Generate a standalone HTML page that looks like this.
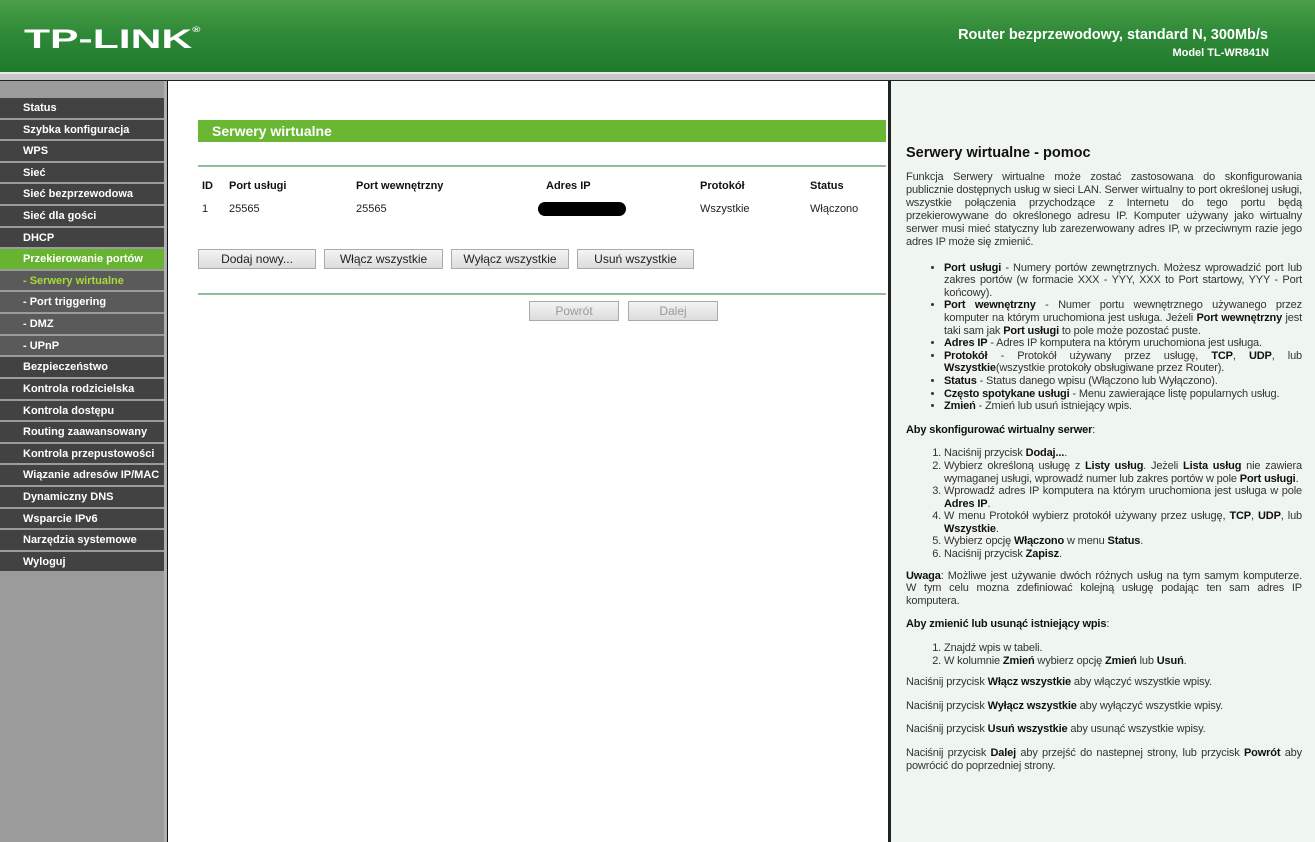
<!DOCTYPE html>
<html><head><meta charset="utf-8"><style>
*{margin:0;padding:0;box-sizing:border-box}
body{width:1315px;height:842px;overflow:hidden;font-family:"Liberation Sans",Arial,sans-serif;background:#fff;position:relative}
#hdr{position:absolute;left:0;top:0;width:1315px;height:72px;background:linear-gradient(180deg,#4c9f47 0%,#2f8a38 45%,#1f7a2c 100%)}
#hdr .logo{position:absolute;left:24px;top:24px;color:#fff;font-weight:bold;font-size:27px;transform:scaleX(1.58);transform-origin:0 0;font-family:"Liberation Sans",Arial,sans-serif;line-height:30px}
#hdr .t1{position:absolute;right:47px;top:27px;color:#fff;font-weight:bold;font-size:14.5px}
#hdr .t2{position:absolute;right:46px;top:47px;color:#fff;font-weight:bold;font-size:11px}
#band{position:absolute;left:0;top:72px;width:1315px;height:9px;background:#c8c8c8;border-top:2px solid #eaeaea;border-bottom:1px solid #222}
#side{position:absolute;left:0;top:81px;width:168px;height:761px;background:#9b9b9b;border-right:1px solid #111}
#side:after{content:"";position:absolute;left:164px;top:0;width:3px;height:761px;background:#b0b0b0}
#side ul{list-style:none;position:absolute;top:17px;left:0;width:164px}
#side li{height:21.62px;border-bottom:2px solid #9b9b9b;background:#424242;color:#fff;font-weight:bold;font-size:11px;line-height:21px;padding-left:23px}
#side li.a{background:#66b42f}
#side li.s{background:#5a5a5a}
#side li.c{color:#a5dd3a}
#help{position:absolute;left:888px;top:81px;width:427px;height:761px;background:#eff5ef;border-left:3px solid #222;padding:66px 13px 0 15px;font-size:11px;line-height:12.6px;color:#333;letter-spacing:-0.15px}
#help h2{font-size:14.5px;color:#111;margin-bottom:11px;font-weight:bold;letter-spacing:0}
#help p{text-align:justify;margin-bottom:11px}
#help p.first{line-height:13px}
#help b{color:#111}
#help ul,#help ol{margin:0 0 9px 38px;text-align:justify}
#help ul{margin-top:13px;margin-bottom:11px}
#help ol{margin-top:7px}
.g{position:absolute;left:198px;top:120px;width:688px;height:22px;background:#69b733;color:#fff;font-weight:bold;font-size:14px;line-height:22px;padding-left:14px}
.ln{position:absolute;left:198px;width:688px;height:2px;background:#8fbe9a}
.tx{position:absolute;font-size:11px;color:#222}
.th{font-weight:bold;color:#111}
.btn{position:absolute;height:20px;background:linear-gradient(#f4f4f4,#dcdcdc);border:1px solid #aaa;font-size:12px;color:#222;text-align:center;line-height:18px}
.dis{color:#999}
</style></head><body>
<div id="hdr"><div class="logo">TP-LINK<span style="font-size:7px;vertical-align:top;line-height:14px">®</span></div>
<div class="t1">Router bezprzewodowy, standard N, 300Mb/s</div><div class="t2">Model TL-WR841N</div></div>
<div id="band"></div>
<div id="side"><ul>
<li>Status</li><li>Szybka konfiguracja</li><li>WPS</li><li>Sieć</li><li>Sieć bezprzewodowa</li><li>Sieć dla gości</li><li>DHCP</li><li class="a">Przekierowanie portów</li><li class="s c">- Serwery wirtualne</li><li class="s">- Port triggering</li><li class="s">- DMZ</li><li class="s">- UPnP</li><li>Bezpieczeństwo</li><li>Kontrola rodzicielska</li><li>Kontrola dostępu</li><li>Routing zaawansowany</li><li>Kontrola przepustowości</li><li>Wiązanie adresów IP/MAC</li><li>Dynamiczny DNS</li><li>Wsparcie IPv6</li><li>Narzędzia systemowe</li><li>Wyloguj</li></ul></div>

<div class="g">Serwery wirtualne</div>
<div class="ln" style="top:165px"></div>
<div class="tx th" style="left:202px;top:180px">ID</div>
<div class="tx th" style="left:229px;top:180px">Port usługi</div>
<div class="tx th" style="left:356px;top:180px">Port wewnętrzny</div>
<div class="tx th" style="left:546px;top:180px">Adres IP</div>
<div class="tx th" style="left:700px;top:180px">Protokół</div>
<div class="tx th" style="left:810px;top:180px">Status</div>
<div class="tx" style="left:202px;top:203px">1</div>
<div class="tx" style="left:229px;top:203px">25565</div>
<div class="tx" style="left:356px;top:203px">25565</div>
<div style="position:absolute;left:538px;top:202px;width:88px;height:14px;background:#000;border-radius:7px"></div>
<div class="tx" style="left:700px;top:203px">Wszystkie</div>
<div class="tx" style="left:810px;top:203px">Włączono</div>
<div class="btn" style="left:198px;top:249px;width:118px">Dodaj nowy...</div>
<div class="btn" style="left:324px;top:249px;width:119px">Włącz wszystkie</div>
<div class="btn" style="left:451px;top:249px;width:118px">Wyłącz wszystkie</div>
<div class="btn" style="left:577px;top:249px;width:117px">Usuń wszystkie</div>
<div class="ln" style="top:293px"></div>
<div class="btn dis" style="left:529px;top:301px;width:90px">Powrót</div>
<div class="btn dis" style="left:628px;top:301px;width:90px">Dalej</div>

<div id="help">
<h2>Serwery wirtualne - pomoc</h2>
<p class="first">Funkcja Serwery wirtualne może zostać zastosowana do skonfigurowania publicznie dostępnych usług w sieci LAN. Serwer wirtualny to port określonej usługi, wszystkie połączenia przychodzące z Internetu do tego portu będą przekierowywane do określonego adresu IP. Komputer używany jako wirtualny serwer musi mieć statyczny lub zarezerwowany adres IP, w przeciwnym razie jego adres IP może się zmienić.</p>
<ul>
<li><b>Port usługi</b> - Numery portów zewnętrznych. Możesz wprowadzić port lub zakres portów (w formacie XXX - YYY, XXX to Port startowy, YYY - Port końcowy).</li>
<li><b>Port wewnętrzny</b> - Numer portu wewnętrznego używanego przez komputer na którym uruchomiona jest usługa. Jeżeli <b>Port wewnętrzny</b> jest taki sam jak <b>Port usługi</b> to pole może pozostać puste.</li>
<li><b>Adres IP</b> - Adres IP komputera na którym uruchomiona jest usługa.</li>
<li><b>Protokół</b> - Protokół używany przez usługę, <b>TCP</b>, <b>UDP</b>, lub <b>Wszystkie</b>(wszystkie protokoły obsługiwane przez Router).</li>
<li><b>Status</b> - Status danego wpisu (Włączono lub Wyłączono).</li>
<li><b>Często spotykane usługi</b> - Menu zawierające listę popularnych usług.</li>
<li><b>Zmień</b> - Zmień lub usuń istniejący wpis.</li>
</ul>
<p><b>Aby skonfigurować wirtualny serwer</b>:</p>
<ol>
<li>Naciśnij przycisk <b>Dodaj...</b>.</li>
<li>Wybierz określoną usługę z <b>Listy usług</b>. Jeżeli <b>Lista usług</b> nie zawiera wymaganej usługi, wprowadź numer lub zakres portów w pole <b>Port usługi</b>.</li>
<li>Wprowadź adres IP komputera na którym uruchomiona jest usługa w pole <b>Adres IP</b>.</li>
<li>W menu Protokół wybierz protokół używany przez usługę, <b>TCP</b>, <b>UDP</b>, lub <b>Wszystkie</b>.</li>
<li>Wybierz opcję <b>Włączono</b> w menu <b>Status</b>.</li>
<li>Naciśnij przycisk <b>Zapisz</b>.</li>
</ol>
<p><b>Uwaga</b>: Możliwe jest używanie dwóch różnych usług na tym samym komputerze. W tym celu mozna zdefiniować kolejną usługę podając ten sam adres IP komputera.</p>
<p><b>Aby zmienić lub usunąć istniejący wpis</b>:</p>
<ol>
<li>Znajdź wpis w tabeli.</li>
<li>W kolumnie <b>Zmień</b> wybierz opcję <b>Zmień</b> lub <b>Usuń</b>.</li>
</ol>
<p>Naciśnij przycisk <b>Włącz wszystkie</b> aby włączyć wszystkie wpisy.</p>
<p>Naciśnij przycisk <b>Wyłącz wszystkie</b> aby wyłączyć wszystkie wpisy.</p>
<p>Naciśnij przycisk <b>Usuń wszystkie</b> aby usunąć wszystkie wpisy.</p>
<p>Naciśnij przycisk <b>Dalej</b> aby przejść do nastepnej strony, lub przycisk <b>Powrót</b> aby powrócić do poprzedniej strony.</p>
</div>
</body></html>
